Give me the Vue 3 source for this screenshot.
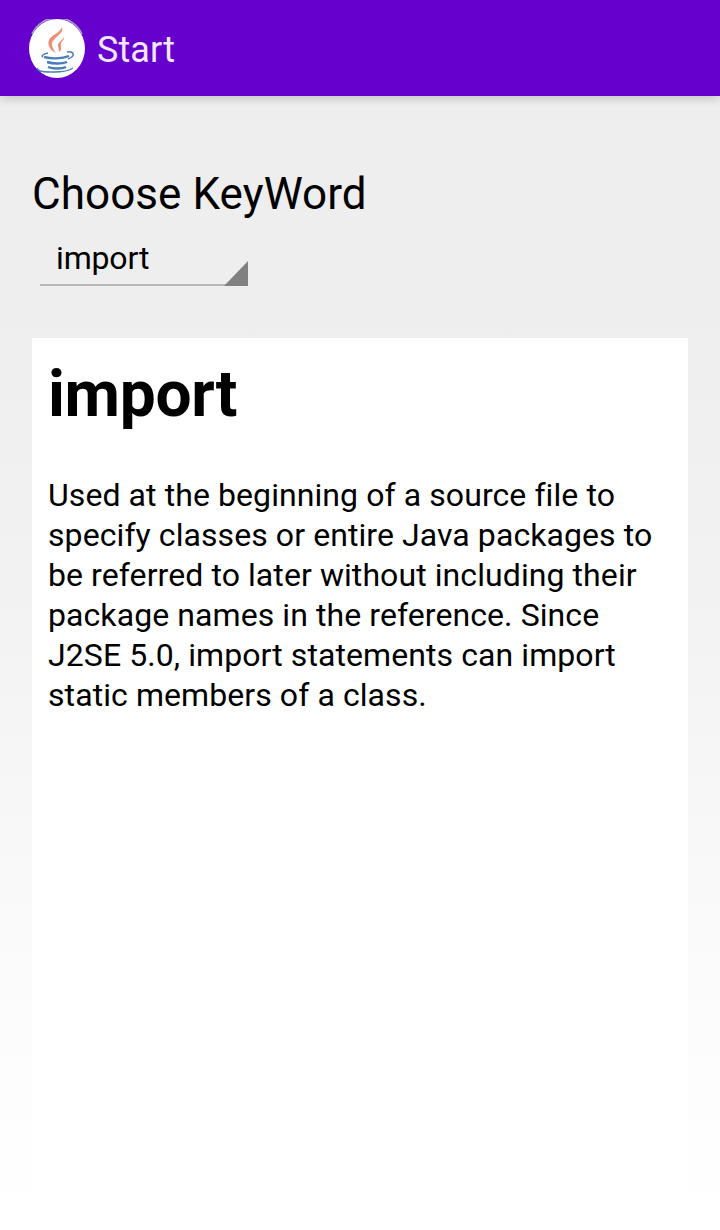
<template>
  <div class="screen">
    <header class="bar">
      <svg class="logo" width="56" height="59" viewBox="0 0 56 59">
        <ellipse cx="28" cy="29.5" rx="28" ry="29.5" fill="#fff" />
        <path d="M3 15 A28 29.5 0 0 1 53 15" fill="none" stroke="#a79fc2" stroke-width="1.6" />
        <path d="M33 8 C36 15 22 19 23 26 C23.500 29 25 31 27 34 C21 31 18 26 20 21 C22 16 31 14 33 8Z" fill="#ec8f74" />
        <path d="M35 17 C35 21 28 23 29 27 C29.500 29 30 31 30 33 C34 30 31 27 32 24 C33 22 36 20 35 17Z" fill="#ec8f74" />
        <path d="M19 34 C14 35 12 37 14 38 M38 33 C45 32 47 37 39 40" fill="none" stroke="#4a7dbb" stroke-width="1.5" />
        <path d="M15 38 C22 40 33 40 40 37 M18 43 C24 45 33 45 38 43 M19 48 C24 50 33 50 37 48" fill="none" stroke="#4a7dbb" stroke-width="2.4" />
        <path d="M8 49 C9 53 16 53 25 53 C33 53 40 52 44 49" fill="none" stroke="#4a7dbb" stroke-width="1.5" />
      </svg>
      <span class="title">Start</span>
    </header>
    <main class="content">
      <h2 class="label">Choose KeyWord</h2>
      <div class="spinner">
        <span>import</span>
        <i class="corner"></i>
      </div>
      <article class="card">
        <h1>import</h1>
        <p>Used at the beginning of a source file to specify classes or entire Java packages to be referred to later without including their package names in the reference. Since J2SE 5.0, import statements can import static members of a class.</p>
      </article>
    </main>
  </div>
</template>

<script setup>
</script>

<style>
html, body { margin: 0; padding: 0; }
</style>

<style scoped>
.screen {
  width: 720px;
  height: 1230px;
  overflow: hidden;
  display: flex;
  flex-direction: column;
  font-family: Roboto, sans-serif;
  background: linear-gradient(#eeeeee 0, #eeeeee 300px, #f3f3f3 640px, #f9f9f9 880px, #fdfdfd 1080px, #ffffff 1230px);
  color: #000;
}
.bar {
  height: 96px;
  flex: none;
  background: #6600cc;
  display: flex;
  align-items: center;
  padding-left: 29px;
  box-sizing: border-box;
  gap: 12px;
  box-shadow: 0 2px 10px rgba(0, 0, 0, 0.2);
}
.logo { flex: none; }
.title {
  color: #f3e6ff;
  font-size: 36px;
  line-height: 1;
  margin-top: 4px;
  letter-spacing: 0.1px;
}
.content {
  flex: 1;
  padding: 72px 32px 0;
  display: flex;
  flex-direction: column;
  min-height: 0;
}
.label {
  margin: 0;
  font-size: 44px;
  font-weight: 400;
  line-height: 52px;
  letter-spacing: 0.07px;
}
.spinner {
  margin: 14px 0 0 8px;
  width: 208px;
  height: 52px;
  box-sizing: border-box;
  padding-left: 16px;
  font-size: 32px;
  line-height: 48px;
  letter-spacing: -0.15px;
  border-bottom: 2px solid #b8b8b8;
  position: relative;
}
.corner {
  position: absolute;
  right: 0;
  bottom: -2px;
  width: 0;
  height: 0;
  border-left: 24px solid transparent;
  border-bottom: 25px solid #808080;
}
.card {
  margin-top: 52px;
  flex: 1;
  padding: 16px;
  background: #fff;
}
.card h1 {
  margin: 0;
  font-size: 64px;
  font-weight: 700;
  line-height: 82px;
  letter-spacing: -0.33px;
}
.card p {
  margin: 39px 0 0;
  font-size: 32px;
  line-height: 40px;
  letter-spacing: 0.08px;
}
</style>
